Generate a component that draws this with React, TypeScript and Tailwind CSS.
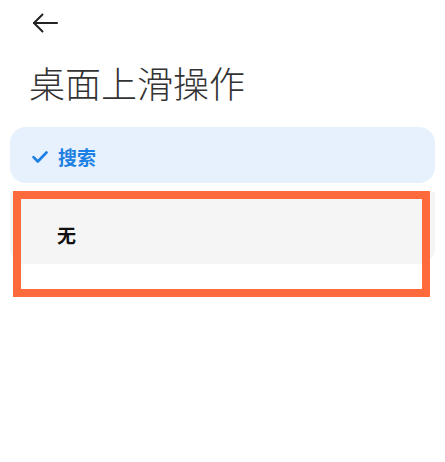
import React from "react";

const font = { fontFamily: '"Noto Sans CJK SC", "Noto Sans", sans-serif' };

function BackArrow() {
  return (
    <svg width="26" height="22" viewBox="0 0 26 22" fill="none" stroke="#222" strokeWidth="2" strokeLinecap="round" strokeLinejoin="round">
      <path d="M25 11H2" />
      <path d="M10.5 2.5L2 11l8.5 8.5" />
    </svg>
  );
}

function Check() {
  return (
    <svg width="16" height="12" viewBox="0 0 16 12" fill="none" stroke="#1b7fe3" strokeWidth="2.6" strokeLinecap="round" strokeLinejoin="round">
      <path d="M1.5 6.2l4.3 4.3L14.5 1.5" />
    </svg>
  );
}

export default function App() {
  return (
    <div className="w-[445px] h-[462px] bg-white overflow-hidden relative" style={font}>
      <div className="pt-[12px] pl-[32px] h-[34px]">
        <BackArrow />
      </div>

      <h1 className="pl-[29px] mt-[24px] text-[36px] leading-[48px] font-light text-[#333]">
        桌面上滑操作
      </h1>

      <div className="mx-[10px] mt-[21px] flex flex-col">
        <div className="h-[56px] rounded-[16px] bg-[#e6f1fd] flex items-center pl-[22px] pt-[4px]">
          <Check />
          <span className="ml-[10px] text-[19px] leading-[24px] font-bold text-[#1b7fe3]">搜索</span>
        </div>
        <div className="mt-[9px] h-[72px] rounded-b-[16px] bg-[#f5f5f5] flex items-center pl-[47px] pt-[14px]">
          <span className="text-[19px] leading-[24px] font-bold text-[#111]">无</span>
        </div>
      </div>

      <div className="absolute left-[13px] top-[191px] w-[417px] h-[106px] border-[8px] border-[#ff6a3d] pointer-events-none">
        <div className="mt-[65px] h-[25px] bg-white" />
      </div>
    </div>
  );
}
